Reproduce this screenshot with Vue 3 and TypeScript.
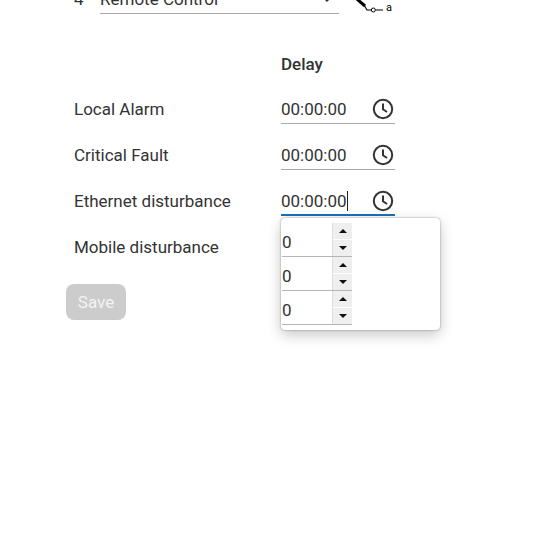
<script setup lang="ts">
const rows = ['Local Alarm', 'Critical Fault', 'Ethernet disturbance', 'Mobile disturbance']
const activeRow = 2
const spinners = [0, 1, 2]
</script>

<template>
  <div class="page">
    <div class="relay-row">
      <span class="relay-no">4</span>
      <div class="select">
        <span>Remote Control</span>
        <svg class="caret" width="10" height="5" viewBox="0 0 10 5"><path d="M0 0h10L5 5z" fill="#333" /></svg>
      </div>
      <svg class="contact" width="48" height="16" viewBox="0 0 48 16">
        <path d="M4 0L12 7" stroke="#000" stroke-width="3" fill="none" />
        <path d="M11 6L14 11H18M22.5 11H30" stroke="#000" stroke-width="1.2" fill="none" />
        <circle cx="20.3" cy="11" r="2" fill="#fff" stroke="#000" stroke-width="1" />
        <text x="33" y="12" font-size="11" font-family="Roboto, sans-serif" fill="#000">a</text>
      </svg>
    </div>

    <div class="delay-head">Delay</div>

    <div class="rows">
      <div v-for="(label, i) in rows" :key="label" class="row">
        <span class="row-label">{{ label }}</span>
        <div v-if="i < 3" class="time" :class="{ 'time--active': i === activeRow }">
          <span class="time-value">00:00:00<i v-if="i === activeRow" class="cursor" /></span>
          <svg width="22" height="22" viewBox="0 0 22 22" fill="none" stroke="#333" stroke-width="2">
            <circle cx="11" cy="11" r="9.2" />
            <path d="M11 5.5V11.3L15 14" />
          </svg>
          <div v-if="i === activeRow" class="popup">
            <div v-for="n in spinners" :key="n" class="spin">
              <span class="spin-value">0</span>
              <div class="spin-btns">
                <span class="spin-btn"><b class="arrow arrow--up" /></span>
                <span class="spin-btn"><b class="arrow arrow--down" /></span>
              </div>
            </div>
          </div>
        </div>
      </div>
    </div>

    <button class="save" disabled>Save</button>
  </div>
</template>

<style>
html, body { background: #fff; overflow: hidden; }
</style>

<style scoped>
.page {
  height: 541px;
  overflow: hidden;
  padding-left: 66px;
  font-family: Roboto, sans-serif;
  font-size: 17px;
  color: #333;
  box-sizing: border-box;
}

.relay-row {
  display: flex;
  align-items: flex-end;
  height: 14px;
  padding-left: 8px;
}
.relay-no { width: 26px; line-height: 20px; margin-bottom: 5px; }
.select {
  width: 239px;
  height: 14px;
  border-bottom: 1px solid #aaa;
  display: flex;
  justify-content: space-between;
  align-items: flex-end;
  line-height: 20px;
  white-space: nowrap;
  box-sizing: content-box;
}
.select span { margin-bottom: 4px; }
.caret { margin: 0 7px 11px 0; }
.contact { margin: 0 0 -1px 14px; flex: none; }

.delay-head {
  margin: 41px 0 0 215px;
  font-weight: 500;
  line-height: 19px;
}

.rows { margin-top: 17px; }
.row {
  display: flex;
  height: 46px;
  padding-left: 8px;
  align-items: flex-start;
}
.row-label { width: 207px; line-height: 36px; }

.time {
  position: relative;
  width: 114px;
  height: 33px;
  border-bottom: 1px solid #aaa;
  display: flex;
  justify-content: space-between;
  align-items: center;
  padding: 4px 1px 0 0;
  box-sizing: border-box;
}
.time--active { border-bottom: 2px solid #1a6fb5; }
.time-value { position: relative; line-height: 26px; }
.cursor {
  position: absolute;
  right: -1px;
  top: 3px;
  width: 1px;
  height: 20px;
  background: #222;
}

.popup {
  position: absolute;
  left: 0;
  top: 35px;
  width: 159px;
  height: 112px;
  background: #fff;
  border-radius: 4px;
  box-shadow: 0 0 2px rgba(0, 0, 0, 0.45), 0 5px 14px rgba(0, 0, 0, 0.22);
  padding: 5px 0 0 1px;
  box-sizing: border-box;
  z-index: 2;
}
.spin {
  display: flex;
  width: 70px;
  height: 34px;
  border-bottom: 1px solid #b5b5b5;
  box-sizing: border-box;
}
.spin-value {
  flex: 1;
  line-height: 38px;
  color: #333;
  border-right: 1px solid #ddd;
}
.spin-btns { width: 19px; display: flex; flex-direction: column; }
.spin-btn {
  flex: 1;
  background: #efefef;
  display: flex;
  align-items: center;
  justify-content: center;
}
.spin-btn + .spin-btn { border-top: 1px solid #fff; }
.arrow { width: 0; height: 0; border-left: 4px solid transparent; border-right: 4px solid transparent; }
.arrow--up { border-bottom: 4px solid #111; }
.arrow--down { border-top: 4px solid #111; }

.save {
  display: block;
  margin-top: 9px;
  width: 60px;
  height: 36px;
  border: none;
  border-radius: 8px;
  background: #ccc;
  color: #f3f3f3;
  font: 17px Roboto, sans-serif;
  padding: 0;
}
</style>
